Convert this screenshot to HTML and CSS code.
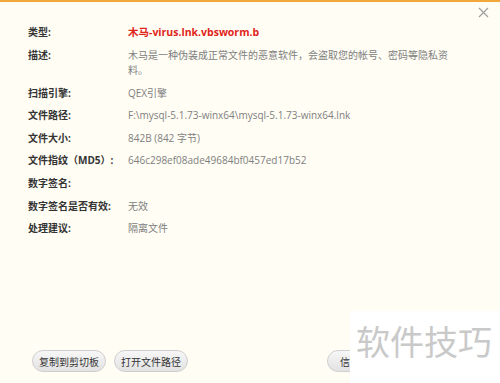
FILE: index.html
```html
<!DOCTYPE html>
<html lang="zh-CN">
<head>
  <meta charset="UTF-8" />
  <title>文件详情</title>
  <link rel="stylesheet" href="styles.css">
</head>
<body>
  <div class="dialog">
    <div class="close">
      <svg width="11" height="11" viewBox="0 0 11 11"><path d="M1 1L10 10M10 1L1 10" stroke="#a0a0a0" stroke-width="1.3" fill="none"/></svg>
    </div>

    <div class="info">
      <div class="row">
        <span class="label">类型:</span>
        <span class="value danger">木马-virus.lnk.vbsworm.b</span>
      </div>
      <div class="row">
        <span class="label">描述:</span>
        <span class="value">木马是一种伪装成正常文件的恶意软件，会盗取您的帐号、密码等隐私资料。</span>
      </div>
      <div class="row">
        <span class="label">扫描引擎:</span>
        <span class="value">QEX引擎</span>
      </div>
      <div class="row">
        <span class="label">文件路径:</span>
        <span class="value">F:\mysql-5.1.73-winx64\mysql-5.1.73-winx64.lnk</span>
      </div>
      <div class="row">
        <span class="label">文件大小:</span>
        <span class="value">842B (842 字节)</span>
      </div>
      <div class="row">
        <span class="label">文件指纹（MD5）:</span>
        <span class="value">646c298ef08ade49684bf0457ed17b52</span>
      </div>
      <div class="row">
        <span class="label">数字签名:</span>
        <span class="value"></span>
      </div>
      <div class="row">
        <span class="label">数字签名是否有效:</span>
        <span class="value">无效</span>
      </div>
      <div class="row">
        <span class="label">处理建议:</span>
        <span class="value">隔离文件</span>
      </div>
    </div>

    <div class="footer">
      <button class="btn">复制到剪切板</button>
      <button class="btn">打开文件路径</button>
      <button class="btn btn-right">信任此文件</button>
    </div>

    <div class="watermark">软件技巧</div>
  </div>
</body>
</html>
```

FILE: styles.css
```css
* {
  margin: 0;
  padding: 0;
  box-sizing: border-box;
}

body {
  background: #fffdf4;
  font-family: "Open Sans", "Noto Sans CJK SC", sans-serif;
  font-size: 10px;
  color: #333;
}

.dialog {
  position: relative;
  height: 383px;
  border-top: 2px solid #f3a73a;
  display: flex;
  flex-direction: column;
  overflow: hidden;
}

.close {
  position: absolute;
  top: 5px;
  right: 11px;
  width: 11px;
  height: 11px;
}

.close svg {
  display: block;
}

.info {
  padding: 23px 40px 0 28px;
}

.row {
  display: flex;
  line-height: 15px;
  margin-bottom: 8px;
}

.row:nth-child(n+3) {
  margin-top: -0.4px;
}

.label {
  flex: 0 0 100px;
  font-weight: bold;
  color: #333;
}

.value {
  flex: 1;
  color: #808080;
}

.value.danger {
  color: #e0241b;
  font-weight: bold;
  font-size: 10.5px;
}

.footer {
  margin-top: auto;
  display: flex;
  gap: 8px;
  padding: 0 97px 11px 32px;
}

.btn {
  height: 22px;
  padding: 0 6px;
  border: 1px solid #cfcfcf;
  border-radius: 11px;
  background: linear-gradient(#f7f7f7, #e2e2e2);
  font-family: "Open Sans", "Noto Sans CJK SC", sans-serif;
  font-size: 10px;
  color: #333;
}

.btn-right {
  margin-left: auto;
  padding: 0 12px;
}

.watermark {
  position: absolute;
  left: 350px;
  top: 309px;
  right: 0;
  bottom: 0;
  background: #fff;
  padding: 10px 0 0 6px;
  font-family: "Noto Sans CJK SC", sans-serif;
  font-size: 34px;
  line-height: 1.2;
  color: #c9c9c9;
}
```
